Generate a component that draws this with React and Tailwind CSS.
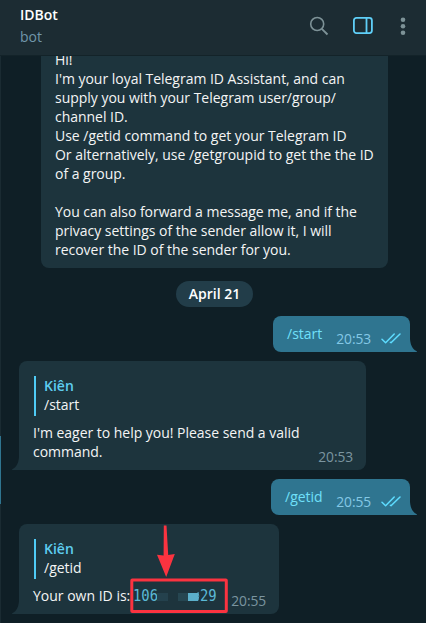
const Tail = ({ flip = false }) => (
  <svg
    className={`absolute bottom-0 h-4 w-[7px] ${flip ? "left-full -scale-x-100 text-[#2f7590]" : "right-full text-[#1d343d]"}`}
    viewBox="0 0 7 16"
    fill="currentColor"
  >
    <path d="M7 0V16H.6C-.1 16 0 15.3.6 15 4.500 13 6.500 9 7 3Z" />
  </svg>
);

const Checks = () => (
  <svg className="h-[11px] w-5" viewBox="0 0 20 11" fill="none" stroke="#5edcff" strokeWidth="1.5" strokeLinecap="round" strokeLinejoin="round">
    <path d="M1 6.200L4.600 9.700L13.200 1" />
    <path d="M9.400 9.400L10 9.700L19 1" />
  </svg>
);

const Outgoing = ({ text, time, width }) => (
  <div className={`relative mr-4 flex h-9 self-end rounded-lg rounded-br-none bg-[#2f7590] pl-3.5 ${width}`}>
    <span className="mt-[8px] text-[#70e0fa]">{text}</span>
    <span className="absolute top-[13px] right-[39px] text-[13.800px] tracking-[-0.1px] text-[#84c8e6]">{time}</span>
    <span className="absolute top-[17px] right-[9px] flex">
      <Checks />
    </span>
    <Tail flip />
  </div>
);

const Quote = ({ text }) => (
  <div className="ml-px h-10 border-l-2 border-[#4fcbf5] pl-2">
    <div className="font-semibold text-[#5ecdf0]">Kiên</div>
    <div>{text}</div>
  </div>
);

export default function App() {
  return (
    <div className="relative flex h-[623px] w-[426px] flex-col overflow-hidden bg-[#0f1f26] font-['Open_Sans','Noto_Sans',sans-serif] text-[14px] leading-[19px] text-[#f4f5f5]">
      <header className="relative z-10 flex h-[56px] shrink-0 items-start justify-between border-b border-[#132329] bg-[#1c2c33] pl-5">
        <div>
          <h1 className="mt-[5px] font-semibold text-white">IDBot</h1>
          <p className="mt-[3px] text-[#7197aa]">bot</p>
        </div>
        <div className="mt-4 flex">
          <svg className="h-5 w-5" viewBox="0 0 20 20" fill="none" stroke="#7d9297" strokeWidth="1.600">
            <circle cx="8.200" cy="8" r="6.500" />
            <path d="M12.800 12.800L18.500 18.500" strokeWidth="1.900" />
          </svg>
          <svg className="ml-6 h-5 w-5" viewBox="0 0 20 20" fill="none" stroke="#5fcff8" strokeWidth="1.800">
            <rect x="0.900" y="1.900" width="18" height="15.200" rx="2.500" />
            <path d="M13.500 2V17" />
          </svg>
          <svg className="mr-[15px] ml-[18px] h-5 w-5" viewBox="0 0 20 20" fill="#7d9297">
            <circle cx="12" cy="3.700" r="2.300" />
            <circle cx="12" cy="10.200" r="2.300" />
            <circle cx="12" cy="16.800" r="2.300" />
          </svg>
        </div>
      </header>

      <main className="flex flex-col items-start">
        <section className="-mt-[6px] ml-[41px] h-[218px] w-[347px] rounded-b-lg bg-[#1d343d] pl-3.5">
          <p className="tracking-[-0.025px] whitespace-pre">{`Hi!
I'm your loyal Telegram ID Assistant, and can
supply you with your Telegram user/group/
channel ID.
Use /getid command to get your Telegram ID
Or alternatively, use /getgroupid to get the the ID
of a group.

You can also forward a message me, and if the
privacy settings of the sender allow it, I will
recover the ID of the sender for you.`}</p>
        </section>

        <div className="mt-[13px] ml-[176px] flex h-[26px] w-[77px] items-center justify-center rounded-full bg-[#223d49] pb-px font-semibold text-white">
          April 21
        </div>

        <div className="mt-[9px] flex w-full flex-col gap-[9px]">
          <Outgoing text="/start" time="20:53" width="w-[137px]" />

          <section className="relative ml-[19px] h-[109px] w-[347px] rounded-lg rounded-bl-none bg-[#1d343d] px-3.5 pt-[15px]">
            <Quote text="/start" />
            <p className="mt-[7px] tracking-[-0.025px] whitespace-pre">{"I'm eager to help you! Please send a valid\ncommand."}</p>
            <span className="absolute right-[13px] bottom-[4px] text-[13.800px] tracking-[-0.1px] text-[#7b95a0]">20:53</span>
            <Tail />
          </section>

          <Outgoing text="/getid" time="20:55" width="w-[139px]" />

          <section className="relative ml-[19px] h-[90px] w-[260px] rounded-lg rounded-bl-none bg-[#1d343d] px-3.5 pt-[15px]">
            <Quote text="/getid" />
            <p className="mt-[7px] flex whitespace-pre">
              <span className="w-[100px]">Your own ID is:</span>
              <span className="inline-block translate-y-[0.5px] scale-y-[1.12] font-['DejaVu_Sans_Mono',monospace] text-[13.900px] text-[#5bb9d6]">106     29</span>
            </p>
            <span className="absolute right-[13px] bottom-[4px] text-[13.800px] tracking-[-0.1px] text-[#7b95a0]">20:55</span>
            <Tail />
          </section>
        </div>
      </main>

      <div className="absolute top-[56px] bottom-0 left-0 w-px bg-[#1a2b32]" />
      <div className="absolute top-[436px] left-0 h-[68px] w-px bg-[#2f7590]" />

      <svg className="absolute top-[520px] left-[120px] h-[103px] w-[120px]" viewBox="0 0 120 103">
        <rect x="37" y="73" width="11" height="8" fill="#24414d" />
        <rect x="58" y="73" width="10" height="8" fill="#264651" />
        <rect x="68" y="73" width="10" height="8" fill="#5bb0cb" />
        <path d="M78 72Q79.500 76 78 80.500" fill="none" stroke="#5bb0cb" strokeWidth="1" />
        <rect x="11.800" y="60" width="94.500" height="31.500" rx="0.500" fill="none" stroke="#fb3340" strokeWidth="3" />
        <path d="M43.800 5.500H46.500L48.200 35L54.800 34L46.200 57L37 34.800L43.600 35.500Z" fill="#fb3340" />
      </svg>
    </div>
  );
}
